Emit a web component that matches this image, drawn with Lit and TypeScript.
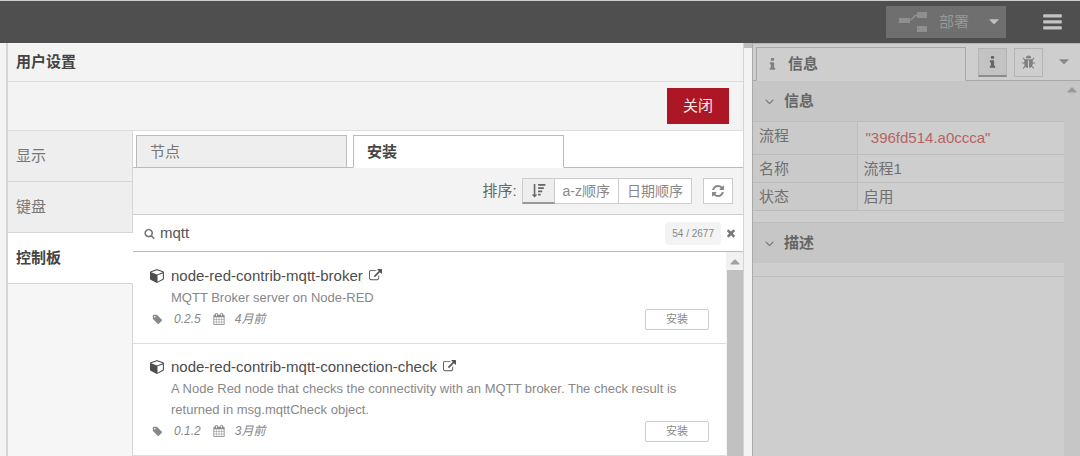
import { LitElement, html, css, svg } from "lit";
import { customElement, property } from "lit/decorators.js";

const ICONS: Record<string, string> = {
  search:
    "M1216 832q0-185-131.5-316.5t-316.5-131.5-316.5 131.5-131.5 316.5 131.5 316.5 316.5 131.5 316.5-131.5 131.5-316.5zm512 832q0 52-38 90t-90 38q-54 0-90-38l-343-342q-179 124-399 124-143 0-273.5-55.5t-225-150-150-225-55.5-273.5 55.5-273.5 150-225 225-150 273.5-55.5 273.5 55.5 225 150 150 225 55.5 273.5q0 220-124 399l343 343q37 37 37 90z",
  cube:
    "M896 1629l640-349v-636l-640 233v752zm-64-865l698-254-698-254-698 254zm832-252v768q0 35-18 65t-49 47l-704 384q-28 16-61 16t-61-16l-704-384q-31-17-49-47t-18-65v-768q0-40 23-73t61-47l704-256q22-8 44-8t44 8l704 256q38 14 61 47t23 73z",
  external:
    "M1408 928v320q0 119-84.5 203.5t-203.5 84.5h-832q-119 0-203.5-84.5t-84.5-203.5v-832q0-119 84.5-203.5t203.5-84.5h704q14 0 23 9t9 23v64q0 14-9 23t-23 9h-704q-66 0-113 47t-47 113v832q0 66 47 113t113 47h832q66 0 113-47t47-113v-320q0-14 9-23t23-9h64q14 0 23 9t9 23zm384-864v512q0 26-19 45t-45 19-45-19l-176-176-652 652q-10 10-23 10t-23-10l-114-114q-10-10-10-23t10-23l652-652-176-176q-19-19-19-45t19-45 45-19h512q26 0 45 19t19 45z",
  tag:
    "M576 448q0-53-37.5-90.5t-90.5-37.5-90.5 37.5-37.5 90.5 37.5 90.5 90.5 37.5 90.5-37.5 37.5-90.5zm1067 576q0 53-37 90l-491 492q-39 37-91 37-53 0-90-37l-715-716q-38-37-64.5-101t-26.5-117v-416q0-52 38-90t90-38h416q53 0 117 26.5t102 64.5l715 714q37 39 37 91z",
  calendar:
    "M192 1664h288v-288h-288v288zm352 0h320v-288h-320v288zm-352-352h288v-320h-288v320zm352 0h320v-320h-320v320zm-352-384h288v-288h-288v288zm736 736h320v-288h-320v288zm-384-736h320v-288h-320v288zm768 736h288v-288h-288v288zm-384-352h320v-320h-320v320zm-352-864v-288q0-13-9.5-22.5t-22.5-9.5h-64q-13 0-22.5 9.5t-9.5 22.5v288q0 13 9.5 22.5t22.5 9.5h64q13 0 22.5-9.5t9.5-22.5zm736 864h288v-320h-288v320zm-384-384h320v-288h-320v288zm384 0h288v-288h-288v288zm32-480v-288q0-13-9.5-22.5t-22.5-9.5h-64q-13 0-22.5 9.5t-9.5 22.5v288q0 13 9.5 22.5t22.5 9.5h64q13 0 22.5-9.5t9.5-22.5zm384-64v1280q0 52-38 90t-90 38h-1408q-52 0-90-38t-38-90v-1280q0-52 38-90t90-38h128v-96q0-66 47-113t113-47h64q66 0 113 47t47 113v96h384v-96q0-66 47-113t113-47h64q66 0 113 47t47 113v96h128q52 0 90 38t38 90z",
  refresh:
    "M1639 1056q0 5-1 7-64 268-268 434.5t-478 166.5q-146 0-282.5-55t-243.5-157l-129 129q-19 19-45 19t-45-19-19-45v-448q0-26 19-45t45-19h448q26 0 45 19t19 45-19 45l-137 137q71 66 161 102t187 36q134 0 250-65t186-179q11-17 53-117 8-23 30-23h192q13 0 22.5 9.5t9.5 22.5zm25-800v448q0 26-19 45t-45 19h-448q-26 0-45-19t-19-45 19-45l138-138q-148-137-349-137-134 0-250 65t-186 179q-11 17-53 117-8 23-30 23h-199q-13 0-22.5-9.5t-9.5-22.5v-7q65-268 270-434.5t480-166.5q146 0 284 55.5t245 156.5l130-129q19-19 45-19t45 19 19 45z",
  times:
    "M1490 1322q0 40-28 68l-136 136q-28 28-68 28t-68-28l-294-294-294 294q-28 28-68 28t-68-28l-136-136q-28-28-28-68t28-68l294-294-294-294q-28-28-28-68t28-68l136-136q28-28 68-28t68 28l294 294 294-294q28-28 68-28t68 28l136 136q28 28 28 68t-28 68l-294 294 294 294q28 28 28 68z",
  bug:
    "M1696 960q0 26-19 45t-45 19h-224q0 171-67 290l208 209q19 19 19 45t-19 45q-18 19-45 19t-45-19l-198-197q-5 5-15 13t-42 28.5-65 36.5-82 29-97 13v-896h-128v896q-51 0-101.5-13.5t-87-33-66-39-43.5-32.5l-15-14-183 207q-20 21-48 21-24 0-43-16-19-18-20.5-44.5t15.5-46.5l202-227q-58-114-58-274h-224q-26 0-45-19t-19-45 19-45 45-19h224v-294l-173-173q-19-19-19-45t19-45 45-19 45 19l173 173h844l173-173q19-19 45-19t45 19 19 45-19 45l-173 173v294h224q26 0 45 19t19 45zm-480-576h-640q0-133 93.5-226.5t226.5-93.5 226.5 93.5 93.5 226.5z",
  info:
    "M1216 1344v128q0 26-19 45t-45 19h-512q-26 0-45-19t-19-45v-128q0-26 19-45t45-19h64v-384h-64q-26 0-45-19t-19-45v-128q0-26 19-45t45-19h384q26 0 45 19t19 45v576h64q26 0 45 19t19 45zm-128-1152v192q0 26-19 45t-45 19h-256q-26 0-45-19t-19-45v-192q0-26 19-45t45-19h256q26 0 45 19t19 45z",
  caret: "M1408 640q0 26-19 45l-448 448q-19 19-45 19t-45-19l-448-448q-19-19-19-45t19-45 45-19h896q26 0 45 19t19 45z",
  caretUp: "M1408 1216q0 26-19 45t-45 19h-896q-26 0-45-19t-19-45 19-45l448-448q19-19 45-19t45 19l448 448q19 19 19 45z",
  angle:
    "M1395 736q0 13-10 23l-466 466q-10 10-23 10t-23-10l-466-466q-10-10-10-23t10-23l50-50q10-10 23-10t23 10l393 393 393-393q10-10 23-10t23 10l50 50q10 10 10 23z",
  sort:
    "M330 128h190v1250h250L425 1740 80 1378h250zM850 128h870v200H850zM850 512h680v200H850zM850 896h490v200H850zM850 1280h300v200H850z",
  bars:
    "M160 190h1472q60 0 60 60v160q0 60-60 60H160q-60 0-60-60V250q0-60 60-60zM160 702h1472q60 0 60 60v160q0 60-60 60H160q-60 0-60-60V762q0-60 60-60zM160 1214h1472q60 0 60 60v160q0 60-60 60H160q-60 0-60-60v-160q0-60 60-60z",
};

@customElement("fa-icon")
class FaIcon extends LitElement {
  @property() name = "";
  @property({ type: Number }) size = 14;

  static styles = css`
    :host {
      display: inline-flex;
      flex: none;
    }
    svg {
      display: block;
      fill: currentColor;
    }
  `;

  render() {
    return html`<svg width=${this.size} height=${this.size} viewBox="0 0 1792 1792" aria-hidden="true">
      ${svg`<path d=${ICONS[this.name] ?? ""}></path>`}
    </svg>`;
  }
}

interface Module {
  name: string;
  description: string;
  version: string;
  updated: string;
}

const MODULES: Module[] = [
  {
    name: "node-red-contrib-mqtt-broker",
    description: "MQTT Broker server on Node-RED",
    version: "0.2.5",
    updated: "4月前",
  },
  {
    name: "node-red-contrib-mqtt-connection-check",
    description:
      "A Node Red node that checks the connectivity with an MQTT broker. The check result is returned in msg.mqttCheck object.",
    version: "0.1.2",
    updated: "3月前",
  },
];

const base = css`
  * {
    box-sizing: border-box;
  }
  button,
  input {
    font: inherit;
    color: inherit;
    margin: 0;
    padding: 0;
    border: 0;
    background: none;
  }
  button {
    display: flex;
    align-items: center;
  }
`;

@customElement("app-header")
class AppHeader extends LitElement {
  static styles = [
    base,
    css`
      :host {
        display: flex;
        align-items: center;
        justify-content: flex-end;
        gap: 36px;
        height: 43px;
        padding-right: 17px;
        border-top: 1px solid #c9cdd0;
        background: #4f4f4f;
      }
      .deploy {
        height: 32px;
        padding: 0 4px 0 13px;
        background: #6f6f6f;
        color: #979797;
      }
      .label {
        margin: 0 17px 0 12px;
      }
      .caret {
        color: #c0c0c0;
      }
      .flow {
        display: block;
        fill: #8f8f8f;
        stroke: #8f8f8f;
      }
      .menu {
        color: #c4c4c4;
      }
    `,
  ];

  render() {
    return html`
      <button class="deploy">
        <svg class="flow" width="28" height="20" viewBox="0 0 28 20" aria-hidden="true">
          <path d="M0 6h11v5H0zM18 0h10v6H18zM18 14h10v6H18z" stroke="none"></path>
          <path d="M10 8.500C15 8.500 13 3 19 3" fill="none" stroke-width="1.500"></path>
        </svg>
        <span class="label">部署</span>
        <fa-icon class="caret" name="caret" size="16"></fa-icon>
      </button>
      <button class="menu" aria-label="菜单"><fa-icon name="bars" size="21"></fa-icon></button>
    `;
  }
}

@customElement("module-row")
class ModuleRow extends LitElement {
  @property({ attribute: false }) module!: Module;

  static styles = [
    base,
    css`
      :host {
        display: block;
        padding: 11px 17px 13px;
        border-bottom: 1px solid #ddd;
        color: #888;
      }
      .title {
        display: flex;
        align-items: center;
        height: 23px;
        font-size: 15px;
        color: #4d4d4d;
      }
      .title a {
        display: flex;
        margin-left: 6px;
        color: #555;
      }
      .cube {
        margin-right: 6px;
      }
      .description {
        margin: 0 20px 0 21px;
        font-size: 13px;
        line-height: 21px;
      }
      .meta {
        display: flex;
        align-items: center;
        height: 22px;
        padding-left: 2px;
        font-size: 12px;
        font-style: italic;
      }
      .version {
        margin: 0 12px 0 11px;
      }
      .updated {
        flex: 1;
        margin-left: 10px;
      }
      .install {
        justify-content: center;
        width: 64px;
        height: 21px;
        border: 1px solid #ccc;
        border-radius: 2px;
        background: #fff;
        font-size: 11px;
        font-style: normal;
      }
    `,
  ];

  render() {
    const m = this.module;
    return html`
      <div class="title">
        <fa-icon class="cube" name="cube" size="15"></fa-icon>
        <span>${m.name}</span>
        <a href="#" aria-label=${m.name}><fa-icon name="external" size="13"></fa-icon></a>
      </div>
      <div class="description">${m.description}</div>
      <div class="meta">
        <fa-icon name="tag" size="11"></fa-icon>
        <span class="version">${m.version}</span>
        <fa-icon name="calendar" size="12"></fa-icon>
        <span class="updated">${m.updated}</span>
        <button class="install">安装</button>
      </div>
    `;
  }
}

@customElement("user-settings")
class UserSettings extends LitElement {
  static styles = [
    base,
    css`
      :host {
        display: flex;
        flex-direction: column;
        min-width: 0;
        border: solid #d4d4d4;
        border-width: 0 1px 0 2px;
        background: #f3f3f3;
      }
      .heading {
        height: 39px;
        margin: 0;
        padding: 0 8px;
        border-bottom: 1px solid #dcdcdc;
        font-size: 15px;
        line-height: 37px;
        color: #444;
      }
      .actions {
        display: flex;
        align-items: center;
        justify-content: flex-end;
        height: 49px;
        padding-right: 14px;
        border-bottom: 1px solid #ddd;
      }
      .close {
        justify-content: center;
        width: 62px;
        height: 36px;
        background: #ad1625;
        color: #f6e8e9;
      }
      .body {
        display: flex;
        flex: 1;
        min-height: 0;
      }
      .nav {
        display: flex;
        flex-direction: column;
        flex: none;
        width: 125px;
        background: #f6f6f6;
      }
      .nav button {
        height: 51px;
        padding: 0 8px;
        border: solid #d6d6d6;
        border-width: 0 1px 1px 0;
        background: #eee;
        color: #777;
      }
      .nav .current {
        border-right-color: #fff;
        background: #fff;
        color: #444;
        font-weight: bold;
      }
      .nav .rest {
        flex: 1;
        border-right: 1px solid #d6d6d6;
      }
      .pane {
        display: flex;
        flex: 1;
        flex-direction: column;
        min-width: 0;
        background: #fff;
      }
      .tabs {
        display: flex;
        flex: none;
        height: 37px;
        padding-top: 4px;
        background: linear-gradient(#bbb, #bbb) bottom / 100% 1px no-repeat;
      }
      .tabs button {
        flex: 0 1 211px;
        margin-left: 3px;
        padding: 0 13px;
        border: 1px solid #bbb;
        background: #eee;
        color: #777;
      }
      .tabs .current {
        margin-left: 6px;
        border-bottom-color: #fff;
        background: #fff;
        color: #444;
        font-weight: bold;
      }
      .toolbar {
        display: flex;
        flex: none;
        align-items: center;
        justify-content: flex-end;
        height: 47px;
        padding-right: 10px;
        border-bottom: 1px solid #ccc;
        background: #f3f3f3;
        color: #666;
      }
      .sorts {
        display: flex;
        margin: 0 11px 0 5px;
      }
      .tool {
        justify-content: center;
        height: 26px;
        padding: 0 8px;
        border: 1px solid #ccc;
        background: #fff;
        font-size: 14px;
        color: #888;
      }
      .tool + .tool {
        border-left: 0;
      }
      .tool.refresh {
        padding: 0 7px;
      }
      .tool.on {
        border-bottom: 2px solid #999;
        background: #eee;
        color: #666;
      }
      .search {
        display: flex;
        flex: none;
        align-items: center;
        height: 37px;
        padding: 0 6px 0 11px;
        border-bottom: 1px solid #bbb;
        color: #777;
      }
      .search input {
        flex: 1;
        min-width: 0;
        padding-left: 5px;
        outline: 0;
        color: #555;
      }
      .count {
        margin-right: 4px;
        padding: 0 7px;
        border-radius: 4px;
        background: #f3f3f3;
        font-size: 10px;
        line-height: 23px;
        color: #888;
      }
      .results {
        display: flex;
        flex: 1;
        min-height: 0;
        overflow: hidden;
      }
      .list {
        flex: 1;
        min-width: 0;
        padding-top: 1px;
      }
      .scroll {
        display: flex;
        flex: none;
        flex-direction: column;
        align-items: center;
        width: 17px;
        background: #f1f1f1;
        color: #a0a0a0;
      }
      .arrow {
        padding: 1px 0;
      }
      .thumb {
        flex: 1;
        width: 16px;
        background: #c1c1c1;
      }
    `,
  ];

  render() {
    return html`
      <h1 class="heading">用户设置</h1>
      <div class="actions"><button class="close">关闭</button></div>
      <div class="body">
        <nav class="nav">
          <button>显示</button>
          <button>键盘</button>
          <button class="current">控制板</button>
          <div class="rest"></div>
        </nav>
        <div class="pane">
          <div class="tabs" role="tablist">
            <button role="tab">节点</button>
            <button role="tab" class="current" aria-selected="true">安装</button>
          </div>
          <div class="toolbar">
            <span>排序:</span>
            <div class="sorts">
              <button class="tool on" aria-label="相关"><fa-icon name="sort" size="15"></fa-icon></button>
              <button class="tool">a-z顺序</button>
              <button class="tool">日期顺序</button>
            </div>
            <button class="tool refresh" aria-label="刷新"><fa-icon name="refresh" size="14"></fa-icon></button>
          </div>
          <div class="search">
            <fa-icon name="search" size="11"></fa-icon>
            <input type="text" aria-label="搜索" .value=${"mqtt"} />
            <span class="count">54 / 2677</span>
            <button aria-label="清除"><fa-icon name="times" size="12"></fa-icon></button>
          </div>
          <div class="results">
            <div class="list">${MODULES.map((m) => html`<module-row .module=${m}></module-row>`)}</div>
            <div class="scroll">
              <fa-icon class="arrow" name="caretUp" size="16"></fa-icon>
              <div class="thumb"></div>
            </div>
          </div>
        </div>
      </div>
    `;
  }
}

@customElement("info-sidebar")
class InfoSidebar extends LitElement {
  static styles = [
    base,
    css`
      :host {
        display: flex;
        flex-direction: column;
        border-left: 1px solid #aaa;
        background: #cecece;
        color: #707070;
      }
      .tabs {
        display: flex;
        flex: none;
        height: 38px;
        padding: 3px 8px 0 3px;
        border-top: 1px solid #b4b4b4;
        background: linear-gradient(#a8a8a8, #a8a8a8) bottom / 100% 1px no-repeat;
      }
      .tab {
        flex: 1;
        gap: 8px;
        margin-right: 12px;
        padding: 0 8px;
        border: 1px solid #a8a8a8;
        border-bottom-color: #cecece;
        background: #cecece;
        color: #666;
        font-weight: bold;
      }
      .tab fa-icon {
        color: #808080;
      }
      .icon {
        justify-content: center;
        width: 29px;
        height: 29px;
        margin: 1px 7px 0 0;
        border: 1px solid #b4b4b4;
        color: #808080;
      }
      .icon.on {
        border-bottom: 2px solid #8c8c8c;
        background: #c3c3c3;
        color: #666;
      }
      .more {
        height: 29px;
        margin-left: 6px;
        color: #888;
      }
      .content {
        display: flex;
        flex: 1;
        min-height: 0;
      }
      .sections {
        flex: 1;
        min-width: 0;
      }
      .section {
        gap: 7px;
        width: 100%;
        height: 40px;
        padding: 0 9px;
        background: #c6c6c6;
        font-weight: bold;
        color: #666;
      }
      .section fa-icon {
        color: #777;
      }
      .lower {
        height: 41px;
        margin-top: 11px;
        border-top: 1px solid #bcbcbc;
      }
      .end {
        height: 14px;
        border-bottom: 1px solid #bcbcbc;
      }
      .properties {
        width: 100%;
        border-collapse: collapse;
        table-layout: fixed;
        line-height: 22px;
      }
      .properties th,
      .properties td {
        height: 28px;
        padding: 0 6px;
        border: solid #bcbcbc;
        border-width: 1px 0;
        text-align: left;
        vertical-align: middle;
        font-weight: normal;
      }
      .properties th {
        width: 104px;
        border-right-width: 1px;
        background: #cacaca;
      }
      .properties .first th {
        height: 33px;
        padding-bottom: 5px;
      }
      .properties .id {
        padding: 0 8px;
        color: #b46464;
      }
      .scroll {
        width: 16px;
        background: #c6c6c6;
        color: #999;
      }
    `,
  ];

  render() {
    return html`
      <div class="tabs">
        <button class="tab"><fa-icon name="info" size="15"></fa-icon>信息</button>
        <button class="icon on" aria-label="信息"><fa-icon name="info" size="15"></fa-icon></button>
        <button class="icon" aria-label="调试"><fa-icon name="bug" size="15"></fa-icon></button>
        <button class="more" aria-label="更多"><fa-icon name="caret" size="16"></fa-icon></button>
      </div>
      <div class="content">
        <div class="sections">
          <button class="section"><fa-icon name="angle" size="15"></fa-icon>信息</button>
          <table class="properties">
            <tr class="first">
              <th scope="row">流程</th>
              <td class="id">"396fd514.a0ccca"</td>
            </tr>
            <tr>
              <th scope="row">名称</th>
              <td>流程1</td>
            </tr>
            <tr>
              <th scope="row">状态</th>
              <td>启用</td>
            </tr>
          </table>
          <button class="section lower"><fa-icon name="angle" size="15"></fa-icon>描述</button>
          <div class="end"></div>
        </div>
        <div class="scroll"><fa-icon name="caretUp" size="16"></fa-icon></div>
      </div>
    `;
  }
}

@customElement("app-root")
class AppRoot extends LitElement {
  static styles = css`
    :host {
      display: flex;
      flex-direction: column;
      height: 100vh;
      overflow: hidden;
      background: #f3f3f3;
      font: 15px/22px "Liberation Sans", "Noto Sans CJK SC", sans-serif;
    }
    app-header {
      box-sizing: border-box;
      flex: none;
    }
    .workspace {
      display: grid;
      flex: 1;
      grid-template-columns: minmax(0, 1fr) 8px 328px;
      min-height: 0;
      padding-left: 6px;
    }
    .separator {
      border-top: 5px solid #bdbdbd;
    }
  `;

  render() {
    return html`
      <app-header></app-header>
      <div class="workspace">
        <user-settings></user-settings>
        <div class="separator"></div>
        <info-sidebar></info-sidebar>
      </div>
    `;
  }
}
